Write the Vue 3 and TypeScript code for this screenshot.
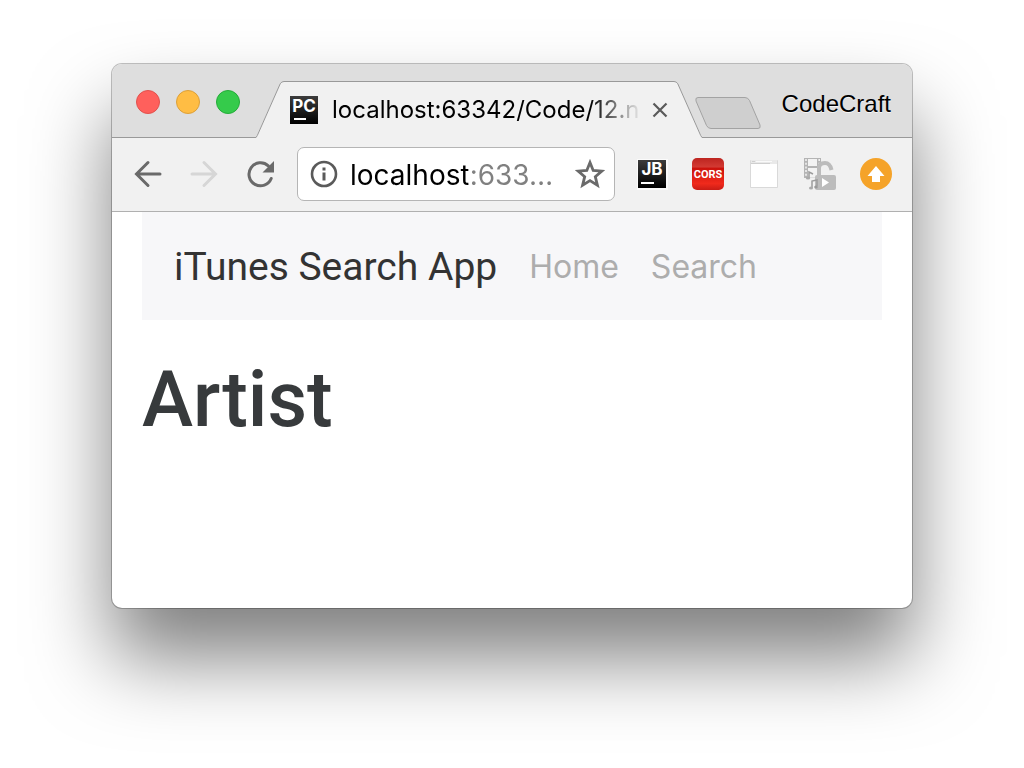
<script setup lang="ts">
import { ref } from 'vue'

const tabTitle = 'localhost:63342/Code/12.n'
const address = ref('localhost:633…')
const links: string[] = ['Home', 'Search']
</script>

<template>
  <div class="desktop">
    <div class="window">
      <header class="tab-strip">
        <div class="lights">
          <button class="light close" aria-label="Close window"></button>
          <button class="light minimise" aria-label="Minimise window"></button>
          <button class="light expand" aria-label="Expand window"></button>
        </div>
        <div class="tab">
          <svg class="slope" width="28" height="57" viewBox="0 0 28 57" aria-hidden="true">
            <path d="M0 56.500L24.200 2.800Q25.500.500 28 .500V57H0Z" fill="#f1f1f1" />
            <path d="M0 56.500L1.300 54.500L24.200 2.800Q25.500.500 28 .500" fill="none" stroke="#999" />
          </svg>
          <div class="tab-body">
            <svg class="favicon" width="28" height="28" viewBox="0 0 28 28" aria-hidden="true">
              <defs>
                <linearGradient id="dark" x1="0" y1="0" x2="0" y2="1">
                  <stop offset="0" stop-color="#3c3c3c" />
                  <stop offset="1" stop-color="#000" />
                </linearGradient>
              </defs>
              <rect width="28" height="28" fill="url(#dark)" />
              <text x="14" y="15.500" text-anchor="middle" class="badge">PC</text>
              <rect x="4" y="22" width="12" height="2" fill="#fff" />
            </svg>
            <span class="tab-title">{{ tabTitle }}</span>
            <button class="plain tab-close" aria-label="Close tab">
              <svg width="16" height="16" viewBox="0 0 16 16">
                <path d="M1.500 1.500L14.500 14.500M14.500 1.500L1.500 14.500" stroke="#5a5a5a" stroke-width="2.200" />
              </svg>
            </button>
          </div>
          <svg class="slope" width="28" height="57" viewBox="0 0 28 57" aria-hidden="true">
            <path d="M28 56.500L3.800 2.800Q2.500.500 0 .500V57H28Z" fill="#f1f1f1" />
            <path d="M28 56.500L26.700 54.500L3.800 2.800Q2.500.500 0 .500" fill="none" stroke="#999" />
          </svg>
        </div>
        <button class="plain new-tab" aria-label="New tab">
          <svg width="66" height="32" viewBox="0 0 66 32">
            <path d="M3 .500H50Q53 .500 54.500 3.500L65 28Q66 31.500 63 31.500H16Q13 31.500 11.500 28.500L1 4Q0 .500 3 .500Z" fill="#cfcfcf" stroke="#a3a3a3" />
          </svg>
        </button>
        <button class="plain profile">CodeCraft</button>
      </header>

      <div class="toolbar">
        <div class="navigation">
          <button class="plain" aria-label="Back">
            <svg width="32" height="32" viewBox="0 0 32 32" fill="none" stroke="#6a6a6a" stroke-width="3" stroke-linecap="round">
              <path d="M28 16H5M16 4.500L4.500 16L16 27.500" />
            </svg>
          </button>
          <button class="plain" aria-label="Forward" disabled>
            <svg width="32" height="32" viewBox="0 0 32 32" fill="none" stroke="#d6d6d6" stroke-width="3" stroke-linecap="round">
              <path d="M4 16H27M16 4.500L27.500 16L16 27.500" />
            </svg>
          </button>
          <button class="plain" aria-label="Reload">
            <svg width="32" height="32" viewBox="0 0 32 32">
              <path d="M24.300 7.800A11.500 11.500 0 1 0 27.200 20.500" fill="none" stroke="#6a6a6a" stroke-width="3" stroke-linecap="round" />
              <path d="M30 3V14.500H18.500Z" fill="#6a6a6a" />
            </svg>
          </button>
        </div>
        <div class="omnibox">
          <button class="plain" aria-label="Site information">
            <svg width="28" height="28" viewBox="0 0 28 28">
              <circle cx="14" cy="14" r="12" fill="none" stroke="#5a5a5a" stroke-width="2.600" />
              <path d="M12.500 7.500H15.500V10.500H12.500ZM12.500 12.500H15.500V20.500H12.500Z" fill="#5a5a5a" />
            </svg>
          </button>
          <input v-model="address" class="address" type="text" aria-label="Address" spellcheck="false" />
          <button class="plain" aria-label="Bookmark this page">
            <svg width="30" height="30" viewBox="0 0 30 30">
              <path d="M15 3.500L18.200 11.500L26.900 12.100L20.300 17.700L22.400 26.200L15 21.600L7.600 26.200L9.700 17.700L3.100 12.100L11.800 11.500Z" fill="none" stroke="#6a6a6a" stroke-width="2.800" />
            </svg>
          </button>
        </div>
        <div class="extensions">
          <button class="plain" aria-label="JetBrains">
            <svg width="32" height="32" viewBox="0 0 32 32">
              <rect x="1" y="1" width="31" height="31" fill="#fbfbfb" />
              <rect x="2" y="2" width="28" height="28" fill="url(#dark)" />
              <text x="16" y="17" text-anchor="middle" class="badge">JB</text>
              <rect x="5" y="24" width="13" height="2" fill="#fff" />
            </svg>
          </button>
          <button class="plain" aria-label="CORS">
            <svg width="32" height="32" viewBox="0 0 32 32">
              <defs>
                <linearGradient id="red" x1="0" y1="0" x2="0" y2="1">
                  <stop offset="0" stop-color="#bd2520" />
                  <stop offset=".28" stop-color="#d33a33" />
                  <stop offset=".32" stop-color="#cb120c" />
                  <stop offset=".8" stop-color="#f02a1c" />
                  <stop offset="1" stop-color="#c91c15" />
                </linearGradient>
              </defs>
              <rect width="32" height="32" rx="5" fill="url(#red)" />
              <text x="16" y="20" text-anchor="middle" class="badge cors">CORS</text>
            </svg>
          </button>
          <button class="plain" aria-label="Window">
            <svg width="32" height="32" viewBox="0 0 32 32">
              <rect x="2" y="2" width="28" height="28" rx="1" fill="#d9d9d9" />
              <rect x="3" y="2" width="26" height="27" fill="#fff" />
              <path d="M3 2H29V6H3Z" fill="#e9e9e9" />
              <path d="M4 3.500H7M3 5.500H22" stroke="#cfcfcf" />
              <path d="M8 3.500H24" stroke="#fafafa" />
            </svg>
          </button>
          <button class="plain" aria-label="Media unlocker">
            <svg width="32" height="32" viewBox="0 0 32 32">
              <rect width="17" height="20" fill="#b4b4b4" />
              <path d="M4 1H13V8H4ZM4 10H13V19H4Z" fill="#f3f3f3" />
              <path d="M2 1V19M15.200 1V19" stroke="#f1f1f1" stroke-width="1.600" stroke-dasharray="2 1.700" />
              <path d="M4 20L17 9V20Z" fill="#f1f1f1" opacity=".7" />
              <path d="M15 19V10Q15 5 21 5Q26 5 27.500 12" fill="none" stroke="#bcbcbc" stroke-width="4" />
              <rect x="11" y="17" width="21" height="15" rx="2" fill="#bcbcbc" />
              <path d="M18 20L25 24.500L18 29Z" fill="#fff" />
              <path d="M5 20V14L9 16M8 30V23L13 22V28" fill="none" stroke="#9c9c9c" stroke-width="1.500" />
              <ellipse cx="4" cy="20" rx="2.200" ry="1.600" fill="#aaa" />
              <ellipse cx="7" cy="30" rx="2" ry="1.600" fill="#aaa" />
              <ellipse cx="12" cy="29" rx="1.800" ry="1.500" fill="#999" />
            </svg>
          </button>
          <button class="plain" aria-label="Update available">
            <svg width="32" height="32" viewBox="0 0 32 32">
              <circle cx="16" cy="16" r="16" fill="#f5a329" />
              <path d="M16 8L24.500 18H20V24H12V18H7.500Z" fill="#fff" />
            </svg>
          </button>
        </div>
      </div>

      <main class="page">
        <nav class="navbar">
          <a class="brand" href="#">iTunes Search App</a>
          <a v-for="link in links" :key="link" class="nav-link" href="#">{{ link }}</a>
        </nav>
        <h1>Artist</h1>
      </main>
    </div>
  </div>
</template>

<style>
body {
  background: #fff;
}
</style>

<style scoped>
.desktop {
  box-sizing: border-box;
  display: flex;
  min-height: 100vh;
  padding: 64px 112px 160px;
  overflow: hidden;
  font-family: Inter, "Noto Sans", sans-serif;
}

.window {
  display: flex;
  flex: 1;
  flex-direction: column;
  min-width: 0;
  border-radius: 10px;
  background: #fff;
  box-shadow: 0 0 0 1px rgba(0, 0, 0, 0.24), 0 50px 80px rgba(0, 0, 0, 0.5);
}

.plain {
  display: flex;
  flex: none;
  padding: 0;
  border: 0;
  background: none;
}

.tab-strip {
  box-sizing: border-box;
  display: flex;
  align-items: flex-end;
  height: 74px;
  padding-right: 21px;
  border-bottom: 1px solid #999;
  border-radius: 10px 10px 0 0;
  background: #dedede;
}

.lights {
  display: flex;
  gap: 16px;
  padding: 0 16px 23px 24px;
}

.light {
  width: 24px;
  height: 24px;
  padding: 0;
  border: 1px solid;
  border-radius: 50%;
}

.close {
  border-color: #e2514d;
  background: #ff605c;
}

.minimise {
  border-color: #dda038;
  background: #ffbd44;
}

.expand {
  border-color: #24ac39;
  background: #35cb4b;
}

.tab {
  display: flex;
  flex: 1;
  min-width: 0;
  margin-bottom: -1px;
}

.slope,
.favicon {
  flex: none;
  overflow: visible;
}

.tab-body {
  display: flex;
  flex: 1;
  align-items: center;
  min-width: 0;
  padding: 0 6px;
  border-top: 1px solid #999;
  background: #f1f1f1;
}

.tab-title {
  flex: 1;
  min-width: 0;
  margin: 0 10px 0 14px;
  overflow: hidden;
  color: #000;
  font-size: 24px;
  line-height: 32px;
  white-space: nowrap;
  mask-image: linear-gradient(to right, #000 calc(100% - 52px), transparent);
}

.new-tab {
  margin: 0 21px 8px -7px;
}

.profile {
  padding-bottom: 19px;
  color: #000;
  font: 24px/28px "Liberation Sans", Arial, sans-serif;
  text-shadow: 0 1px 0 #f6f6f6;
}

.toolbar {
  box-sizing: border-box;
  display: flex;
  align-items: center;
  height: 74px;
  padding: 0 20px 2px;
  border-bottom: 1px solid #b0b0b0;
  background: #f1f1f1;
}

.navigation,
.extensions {
  display: flex;
  gap: 24px;
}

.omnibox {
  box-sizing: border-box;
  display: flex;
  flex: 1;
  align-items: center;
  min-width: 0;
  height: 54px;
  margin: 0 21px;
  padding: 0 9px 0 12px;
  border: 1px solid #b5b5b5;
  border-radius: 7px;
  background: #fff;
}

.address {
  flex: 1;
  width: 0;
  min-width: 0;
  margin: 0 12px;
  padding: 2px 0 0;
  border: 0;
  outline: 0;
  background: linear-gradient(to right, #000 118px, #808080 118px);
  background-clip: text;
  color: transparent;
  font: 28px/36px Inter, "Noto Sans", sans-serif;
}

.badge {
  fill: #fff;
  font-family: Inter, sans-serif;
  font-size: 17px;
  font-weight: 700;
}

.cors {
  font-family: Roboto, sans-serif;
  font-size: 11px;
}

.page {
  padding: 0 30px;
}

.navbar {
  display: flex;
  align-items: center;
  gap: 32px;
  padding: 25px 32px 23px;
  background: #f7f7f9;
}

.navbar a {
  color: #adadad;
  font-size: 32px;
  line-height: 60px;
  text-decoration: none;
  white-space: nowrap;
}

.navbar .brand {
  color: #333;
  font-family: Roboto, Inter, sans-serif;
  font-size: 39px;
}

h1 {
  margin: 36px 0 16px;
  color: #373a3c;
  font-family: Roboto, Inter, sans-serif;
  font-size: 77px;
  font-weight: 500;
  line-height: 88px;
}
</style>
